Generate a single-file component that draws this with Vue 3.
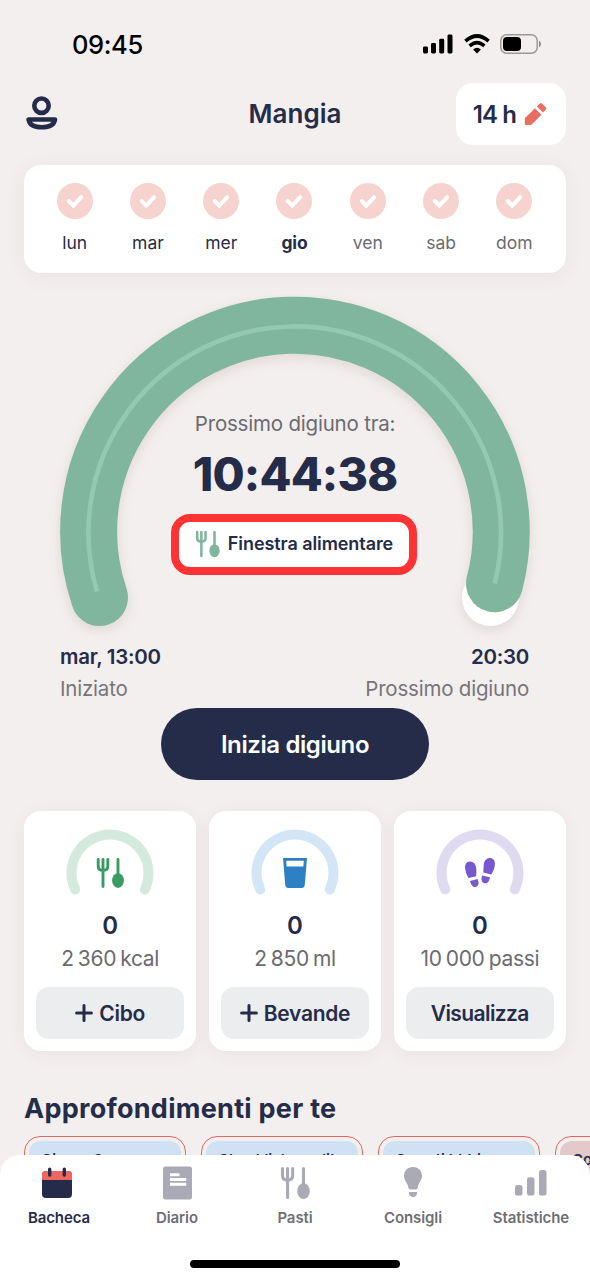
<script setup>
const days = [
  { name: 'lun', state: 'past' },
  { name: 'mar', state: 'past' },
  { name: 'mer', state: 'past' },
  { name: 'gio', state: 'today' },
  { name: 'ven', state: 'next' },
  { name: 'sab', state: 'next' },
  { name: 'dom', state: 'next' },
]
const stats = [
  { kind: 'food', value: '0', goal: '2 360 kcal', action: 'Cibo', plus: true },
  { kind: 'drink', value: '0', goal: '2 850 ml', action: 'Bevande', plus: true },
  { kind: 'steps', value: '0', goal: '10 000 passi', action: 'Visualizza', plus: false },
]
const insights = [
  { title: 'Giorno 3', tone: 'blue' },
  { title: 'Checklist: medita', tone: 'blue' },
  { title: 'Cosa ti bbbia', tone: 'blue' },
  { title: 'Co', tone: 'rose' },
]
const tabs = [
  { kind: 'board', label: 'Bacheca' },
  { kind: 'diary', label: 'Diario' },
  { kind: 'meals', label: 'Pasti' },
  { kind: 'tips', label: 'Consigli' },
  { kind: 'charts', label: 'Statistiche' },
]
</script>

<template>
  <div class="screen">
    <svg class="defs" width="0" height="0" aria-hidden="true">
      <symbol id="cutlery" viewBox="0 0 28 32">
        <path d="M2.200 2.400V9.200Q2.200 13.300 7 13.300Q11.800 13.300 11.800 9.200V2.400M7 2.400V29.600M22 2.400V18" fill="none" stroke="currentColor" stroke-width="2.900" stroke-linecap="round" stroke-linejoin="round" />
        <ellipse cx="22" cy="23.600" rx="5.900" ry="7.400" fill="currentColor" />
      </symbol>
    </svg>

    <div class="status">
      <span class="clock">09:45</span>
      <div class="signals">
        <svg width="30" height="20" viewBox="0 0 30 20">
          <rect x="0" y="12.500" width="5" height="7" rx="1.400" />
          <rect x="8" y="9" width="5" height="10.500" rx="1.400" />
          <rect x="16.200" y="4.800" width="5" height="14.700" rx="1.400" />
          <rect x="24.500" y="0.500" width="5" height="19" rx="1.400" />
        </svg>
        <svg width="26" height="20" viewBox="0 0 26 20">
          <g fill="none" stroke="#000" stroke-width="3.600">
            <path d="M1.400 7.200Q13-3.200 24.600 7.200" />
            <path d="M5.600 11.900Q13 5.300 20.400 11.900" />
          </g>
          <path d="M9.100 15.400Q13 12.200 16.900 15.400L13 19.500Z" />
        </svg>
        <svg width="42" height="20" viewBox="0 0 42 20">
          <rect x="0.800" y="0.800" width="36.400" height="18.400" rx="5.800" fill="none" stroke="#9b9898" stroke-width="1.500" />
          <rect x="3" y="3" width="18" height="14" rx="4" />
          <path d="M39 6.500Q41 7.600 41 10T39 13.500Z" fill="#8b8888" />
        </svg>
      </div>
    </div>

    <header class="header">
      <svg class="profile" width="32" height="36" viewBox="0 0 32 36" fill="none" stroke="#252c49" stroke-width="4.600">
        <circle cx="15.500" cy="10.700" r="7.200" />
        <path d="M2.600 24.500H29Q27.600 32.300 15.800 32.300T2.600 24.500Z" stroke-linejoin="round" />
      </svg>
      <h1 class="heading">Mangia</h1>
      <div class="plan">
        <span>14 h</span>
        <svg width="24" height="25" viewBox="0 0 24 25" fill="#e76f62">
          <path d="M1.800 23Q.8 23 .8 22V17.300Q.8 16.300 1.500 15.600L11 6.300L17.400 12.700L8 22.200Q7 23 6 23Z" />
          <path d="M12.800 4.500L15.800 1.500Q16.900 .5 18 1.500L21.900 5.400Q22.900 6.500 21.900 7.600L19 10.600Z" />
        </svg>
      </div>
    </header>

    <section class="week">
      <div v-for="day in days" :key="day.name" class="day" :class="day.state">
        <svg width="36" height="36" viewBox="0 0 36 36">
          <circle cx="18" cy="18" r="18" fill="#f6d3cf" />
          <path d="M11.700 18L16.300 22.700L24.200 14.200" fill="none" stroke="#fff" stroke-width="4" stroke-linecap="round" />
        </svg>
        <span>{{ day.name }}</span>
      </div>
    </section>

    <section class="gauge">
      <svg class="dial" width="590" height="371" viewBox="0 0 590 371">
        <g class="ring" fill="none" stroke-linecap="round">
          <circle cx="490.500" cy="324.500" r="28.500" fill="#fff" />
          <path d="M99.500 324.600A206.300 206.300 0 1 1 494.500 310.700" stroke="#80b69d" stroke-width="57" />
        </g>
        <path d="M97 318.500A206.300 206.300 0 1 1 494.700 310.500" fill="none" stroke="#93c9af" stroke-width="4.600" />
      </svg>
      <div class="readout">
        <p class="until">Prossimo digiuno tra:</p>
        <p class="timer">10:44:38</p>
        <div class="window">
          <svg class="cutlery" width="25" height="28"><use href="#cutlery" /></svg>
          <span>Finestra alimentare</span>
        </div>
      </div>
    </section>

    <section class="times">
      <div class="start"><strong>mar, 13:00</strong><span>Iniziato</span></div>
      <div class="end"><strong>20:30</strong><span>Prossimo digiuno</span></div>
    </section>

    <button class="begin">Inizia digiuno</button>

    <section class="stats">
      <article v-for="stat in stats" :key="stat.kind" class="stat" :class="stat.kind">
        <div class="mini">
          <svg class="arc" width="90" height="68" viewBox="0 0 90 68">
            <path d="M10.200 60.500A38.500 38.500 0 1 1 79.800 60.500" fill="none" stroke="currentColor" stroke-width="10" stroke-linecap="round" />
          </svg>
          <svg v-if="stat.kind === 'food'" class="glyph" width="28" height="32"><use href="#cutlery" /></svg>
          <svg v-else-if="stat.kind === 'drink'" class="glyph" width="28" height="32" viewBox="0 0 28 32">
            <path fill="#2d80c4" fill-rule="evenodd" d="M2 1H26L23.800 27.500Q23.500 31 20.500 31H7.500Q4.500 31 4.200 27.500ZM5.200 3.800L5.600 9.600H22.400L22.800 3.800Z" />
          </svg>
          <svg v-else class="glyph" width="32" height="32" viewBox="0 0 32 32" fill="#7858cf">
            <path d="M1.200 12C.5 7.500 2.500 4.800 5.800 4.600C10 4.300 12.200 8.200 12.300 12C12.400 15 12.400 17.500 12.200 19.200L4.500 21C2.500 17.500 1.500 14.800 1.200 12Z" />
            <path d="M6 23.900L13.600 22.100Q16 28 12.400 29.700Q8 31.500 6 23.900Z" />
            <path d="M30.800 8.500C31.500 4 29.500 1.100 26.200.9C22 .6 19.800 4.500 19.700 8.300C19.600 11.300 19.300 13.800 19.300 15.600L27.300 17.400C29.500 14.200 30.500 11.300 30.800 8.500Z" />
            <path d="M18 18.400L26 20.200Q24.900 26.800 20.500 26.200Q16.200 25.200 18 18.400Z" />
          </svg>
        </div>
        <strong class="value">{{ stat.value }}</strong>
        <span class="goal">{{ stat.goal }}</span>
        <button class="action">
          <svg v-if="stat.plus" width="18" height="18" viewBox="0 0 18 18" fill="none" stroke="#252c49" stroke-width="3" stroke-linecap="round">
            <path d="M9 1.600V16.400M1.600 9H16.400" />
          </svg>
          <span>{{ stat.action }}</span>
        </button>
      </article>
    </section>

    <h2 class="subtitle">Approfondimenti per te</h2>
    <section class="insights">
      <article v-for="item in insights" :key="item.title" class="insight" :class="item.tone">
        <div>{{ item.title }}</div>
      </article>
    </section>

    <nav class="tabbar">
      <div class="tabs">
        <div v-for="tab in tabs" :key="tab.kind" class="tab" :class="tab.kind">
          <svg v-if="tab.kind === 'board'" width="32" height="34" viewBox="0 0 32 34">
            <rect x="1" y="5" width="30" height="27" rx="4" fill="#252c49" />
            <path d="M1 14V9Q1 5 5 5H27Q31 5 31 9V14Z" fill="#ed6660" />
            <path d="M8.700 3.300V9M23.300 3.300V9" stroke="#252c49" stroke-width="3.400" stroke-linecap="round" />
          </svg>
          <svg v-else-if="tab.kind === 'diary'" width="32" height="34" viewBox="0 0 32 34">
            <rect x="2" y="0.500" width="29" height="33" rx="2.500" fill="#a9aab5" />
            <path d="M10.500 8.700H17M10.500 13.500H23.700M10.500 18.300H23.700" stroke="#fff" stroke-width="3" stroke-linecap="square" />
          </svg>
          <svg v-else-if="tab.kind === 'meals'" width="30" height="34"><use href="#cutlery" /></svg>
          <svg v-else-if="tab.kind === 'tips'" width="20" height="34" viewBox="0 0 20 34" fill="#a9aab5">
            <path d="M10 1C4.500 1 1 5 1 9.800C1 14.500 4.500 17 5.200 21Q5.500 23.500 7.500 23.500H12.500Q14.500 23.500 14.800 21C15.500 17 19 14.500 19 9.800C19 5 15.500 1 10 1Z" />
            <path d="M5.800 26H14.200Q14.200 31 10 31T5.800 26Z" />
          </svg>
          <svg v-else width="34" height="34" viewBox="0 0 34 34" fill="#a9aab5">
            <rect x="1" y="19" width="7.500" height="10.500" rx="2.600" />
            <rect x="13" y="11.300" width="7.500" height="18.200" rx="2.600" />
            <rect x="25" y="4" width="7.500" height="25.500" rx="2.600" />
          </svg>
          <span>{{ tab.label }}</span>
        </div>
      </div>
      <div class="home"></div>
    </nav>
  </div>
</template>

<style>
body { margin: 0; overflow: hidden; }
</style>

<style scoped>
* { box-sizing: border-box; }
.screen {
  position: relative;
  display: flex;
  flex-direction: column;
  width: 590px;
  height: 1280px;
  overflow: hidden;
  background: #f3efee;
  color: #252c49;
  font-family: Inter, "Liberation Sans", sans-serif;
  white-space: nowrap;
}
.screen > * { flex-shrink: 0; }
.defs { position: absolute; }
h1, h2, p { margin: 0; }
button { border: 0; padding: 0; font-family: inherit; color: inherit; }
.status {
  height: 83px;
  display: flex;
  justify-content: space-between;
  align-items: center;
  padding: 5px 48px 0 72px;
}
.clock { color: #000; font-size: 25.500px; font-weight: 550; letter-spacing: -0.400px; }
.signals { display: flex; gap: 10.500px; }
.header {
  height: 82px;
  display: grid;
  grid-template-columns: 110px 1fr 110px;
  align-items: start;
  padding: 0 24px;
}
.profile { margin: 12px 0 0 2px; }
.heading { text-align: center; font-size: 26px; line-height: 62px; font-weight: 600; letter-spacing: 0; }
.plan {
  height: 62px;
  display: flex;
  align-items: center;
  justify-content: center;
  gap: 8px;
  padding-right: 1px;
  border-radius: 17px;
  background: #fff;
  font-size: 24px;
  font-weight: 600;
  letter-spacing: -0.900px;
}
.week {
  height: 108px;
  margin: 0 24px;
  padding: 18px 15px 0 14px;
  display: grid;
  grid-template-columns: repeat(7, 1fr);
  border-radius: 17px;
  background: #fff;
  box-shadow: 0 3px 22px rgba(80, 50, 50, .06);
}
.day { display: flex; flex-direction: column; align-items: center; gap: 12px; font-size: 17.500px; line-height: 24px; }
.day.today { font-weight: 700; letter-spacing: -0.200px; }
.day.next { color: #6b6b70; }
.gauge { height: 371px; display: grid; }
.gauge > * { grid-area: 1 / 1; }
.ring { filter: drop-shadow(0 4px 6px rgba(90, 60, 60, .13)); }
.readout { display: flex; flex-direction: column; align-items: center; padding-top: 137px; }
.until { font-size: 20.500px; line-height: 28px; color: #6b6b70; letter-spacing: -0.200px; }
.timer { font-size: 46.500px; line-height: 60px; font-weight: 800; letter-spacing: -0.800px; margin-top: 6px; }
.window {
  width: 246px;
  height: 61px;
  margin: 10px 2px 0 0;
  padding-bottom: 2px;
  display: flex;
  align-items: center;
  justify-content: center;
  gap: 8px;
  border: 8px solid #ff3333;
  border-radius: 19px;
  background: #fff;
  font-size: 18px;
  font-weight: 600;
  letter-spacing: -0.080px;
}
.cutlery { color: #80b69d; }
.times { height: 64px; margin-top: -3px; padding: 0 61px 0 60px; display: flex; justify-content: space-between; font-size: 20.500px; line-height: 32px; }
.times div { display: flex; flex-direction: column; }
.times strong { font-weight: 600; letter-spacing: -0.300px; }
.times span { color: #77757a; letter-spacing: -0.200px; }
.times .end { text-align: right; }
.begin {
  width: 268px;
  height: 72px;
  align-self: center;
  margin-top: 3px;
  border-radius: 36px;
  background: #252c49;
  color: #fff;
  font-size: 24px;
  font-weight: 600;
  letter-spacing: -0.400px;
}
.stats { height: 240px; margin: 31px 24px 0; display: grid; grid-template-columns: repeat(3, 1fr); gap: 12.500px; }
.stat {
  padding: 18px 12px 12px;
  display: flex;
  flex-direction: column;
  align-items: center;
  border-radius: 17px;
  background: #fff;
  box-shadow: 0 3px 18px rgba(80, 50, 50, .06);
}
.mini { display: grid; justify-items: center; height: 68px; }
.mini > * { grid-area: 1 / 1; }
.glyph { margin-top: 28px; }
.food .arc { color: #d5eade; }
.food .glyph { color: #3a9c62; }
.drink .arc { color: #d4e6f5; }
.steps .arc { color: #dfdaf0; }
.value { margin-top: 12px; font-size: 24px; line-height: 34px; font-weight: 600; }
.goal { font-size: 21px; line-height: 32px; color: #6b6b70; letter-spacing: -0.300px; word-spacing: -1.500px; }
.action {
  width: 148px;
  height: 52px;
  margin-top: 12px;
  display: flex;
  align-items: center;
  justify-content: center;
  gap: 6px;
  border-radius: 13px;
  background: #ecedef;
  font-size: 21px;
  font-weight: 600;
  letter-spacing: -0.300px;
}
.steps .action { letter-spacing: -0.600px; }
.subtitle { margin: 40px 0 0 24px; font-size: 27px; line-height: 36px; font-weight: 700; letter-spacing: 0.280px; }
.insights { display: flex; gap: 15px; margin: 9px 0 0 24px; }
.insight {
  flex: none;
  width: 162px;
  height: 150px;
  padding: 4px;
  border: 1.500px solid #df6961;
  border-radius: 16px;
  font-size: 15px;
  font-weight: 600;
  line-height: 20px;
}
.insight div { height: 100%; padding: 9px 12px; border-radius: 12px; background: #cfe1f3; }
.insight.rose div { background: #e3c9ca; }
.tabbar {
  position: absolute;
  inset: 1155px 0 0;
  display: flex;
  flex-direction: column;
  align-items: center;
  border-radius: 20px 20px 0 0;
  background: #fff;
}
.tabs { width: 100%; height: 105px; display: grid; grid-template-columns: repeat(5, 118px); padding-top: 11px; }
.tab { display: flex; flex-direction: column; align-items: center; gap: 7px; font-size: 15px; line-height: 22px; font-weight: 600; letter-spacing: -0.080px; color: #6f6e75; }
.tab.board { color: #252c49; }
.tab.board svg { margin-left: -4px; }
.tab.meals svg { color: #a9aab5; }
.home { width: 210px; height: 8px; border-radius: 4px; background: #000; }
</style>
